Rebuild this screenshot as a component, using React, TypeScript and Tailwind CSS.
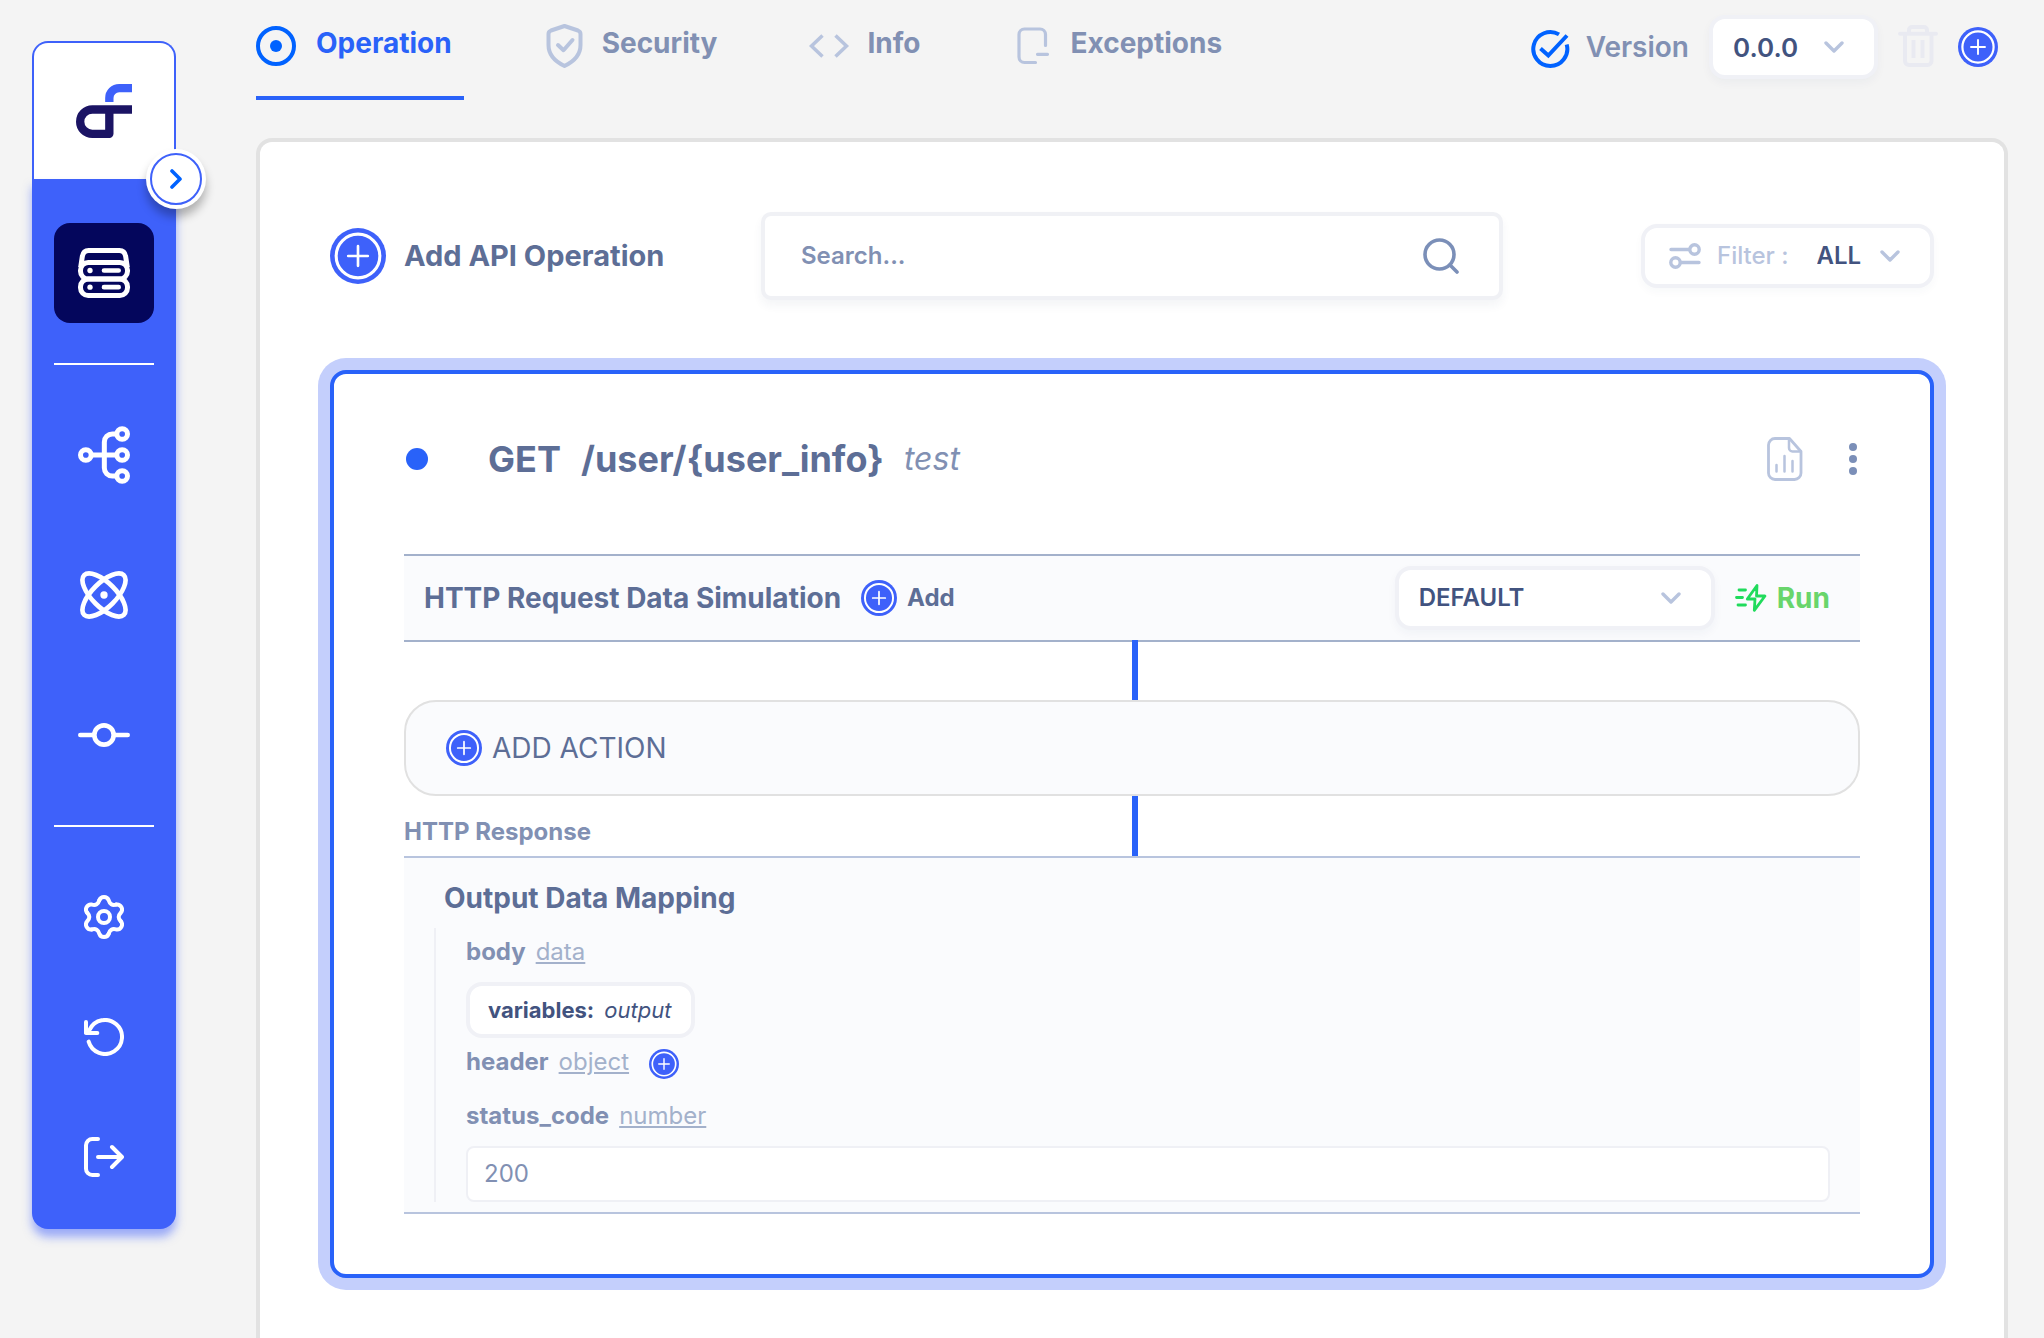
import React from "react";

type SvgProps = { className?: string };

const Logo = () => (
  <svg className="h-[54px] w-14" viewBox="228 192 168 162" fill="none" strokeWidth="25" aria-hidden="true">
    <path d="M328 246V234A29.5 29.5 0 0 1 357.500 204.500H396" stroke="#3e61fa" />
    <path d="M396 268.500H277a36.500 36.500 0 0 0 0 73H328V268.500" stroke="#1b1464" strokeLinejoin="round" />
  </svg>
);

const ServerIcon = () => (
  <svg className="h-[50px] w-[52px]" viewBox="234 684 156 150" fill="none" stroke="currentColor" strokeWidth="15" aria-hidden="true">
    <path d="M242 742L247 709Q250 691.500 266 691.500H358Q374 691.500 377 709L382 742" />
    <rect x="241.500" y="727.500" width="141" height="49.500" rx="23" />
    <rect x="241.500" y="777" width="141" height="49.500" rx="23" />
    <path d="M312 751.500H356M312 801.500H356" strokeLinecap="round" strokeWidth="14" />
    <circle cx="270" cy="751.500" r="8" fill="currentColor" stroke="none" />
    <circle cx="270" cy="801.500" r="8" fill="currentColor" stroke="none" />
  </svg>
);

const NodesIcon = () => (
  <svg className="h-[58px] w-[52px]" viewBox="234 138 156 174" fill="none" stroke="currentColor" strokeWidth="15" aria-hidden="true">
    <circle cx="257.500" cy="225" r="16" />
    <circle cx="366.500" cy="162" r="16" />
    <circle cx="366.500" cy="225" r="16" />
    <circle cx="366.500" cy="288" r="16" />
    <path d="M274 225H350M350 162H337a24 24 0 0 0-24 24V264a24 24 0 0 0 24 24H350" />
  </svg>
);

const AtomIcon = () => (
  <svg className="h-12 w-12" viewBox="-72 -72 144 144" fill="none" stroke="currentColor" strokeWidth="14" aria-hidden="true">
    <ellipse rx="84" ry="36" transform="rotate(45)" />
    <ellipse rx="84" ry="36" transform="rotate(-45)" />
    <circle r="11" fill="currentColor" stroke="none" />
  </svg>
);

const CommitIcon = () => (
  <svg className="h-6 w-[52px]" viewBox="0 0 156 72" fill="none" stroke="currentColor" strokeWidth="14" strokeLinecap="round" aria-hidden="true">
    <circle cx="78" cy="36" r="29" />
    <path d="M7 36H45M111 36H149" />
  </svg>
);

const GearIcon = () => (
  <svg className="h-11 w-10" viewBox="-60 -66 120 132" fill="none" stroke="currentColor" strokeWidth="12" strokeLinecap="round" aria-hidden="true">
    {[0, 60, 120, 180, 240, 300].map((a) => (
      <path key={a} transform={`rotate(${a})`} d="M-14.100 -50.100A15 15 0 0 1 14.100 -50.100Q18.800 -32.600 36.300 -37.300" />
    ))}
    <circle r="18" />
  </svg>
);

const ResetIcon = () => (
  <svg className="h-[38px] w-10" viewBox="252 654 120 114" fill="none" stroke="currentColor" strokeWidth="12" strokeLinecap="round" strokeLinejoin="round" aria-hidden="true">
    <path d="M266 725A51 51 0 1 0 269 689L258 699M258 666V699H292" />
  </svg>
);

const LogoutIcon = () => (
  <svg className="h-10 w-10" viewBox="252 1011 120 120" fill="none" stroke="currentColor" strokeWidth="12" strokeLinecap="round" strokeLinejoin="round" aria-hidden="true">
    <path d="M294 1017H277a19 19 0 0 0-19 19V1106a19 19 0 0 0 19 19H294M294 1071H365M336 1041L366 1071L336 1101" />
  </svg>
);

const TargetIcon = () => (
  <svg className="h-11 w-11 shrink-0" viewBox="0 0 44 44" fill="none" stroke="#0062ff" strokeWidth="4" aria-hidden="true">
    <circle cx="20" cy="22" r="18" />
    <circle cx="20" cy="22" r="6" fill="#0062ff" stroke="none" />
  </svg>
);

const ShieldIcon = () => (
  <svg className="h-11 w-11 shrink-0" viewBox="0 0 44 44" fill="none" stroke="#b8c4de" strokeWidth="4" strokeLinecap="round" strokeLinejoin="round" aria-hidden="true">
    <path d="M22.500 2L36 6.500Q38.500 7.500 38.500 10V21C38.500 31 32 37.500 22.500 42C13 37.500 6.500 31 6.500 21V10Q6.500 7.500 9 6.500Z" />
    <path d="M16 21L21.500 26.200L30.500 16" />
  </svg>
);

const CodeIcon = () => (
  <svg className="h-11 w-11 shrink-0" viewBox="0 0 44 44" fill="none" stroke="#b8c4de" strokeWidth="3.500" aria-hidden="true">
    <path d="M15.500 11.500L4.500 22L15.500 32.500M28.500 11.500L39.500 22L28.500 32.500" />
  </svg>
);

const PageMinusIcon = () => (
  <svg className="h-11 w-11 shrink-0" viewBox="0 0 44 44" fill="none" stroke="#b8c4de" strokeWidth="3.200" strokeLinecap="round" aria-hidden="true">
    <path d="M35.500 21.500V10.500a5.500 5.500 0 0 0-5.500-5.500H14.500a5.500 5.500 0 0 0-5.500 5.500V33a5.500 5.500 0 0 0 5.500 5.500H25.500M27.500 30.300H37.500" />
  </svg>
);

const CheckCircleIcon = () => (
  <svg className="h-11 w-10 shrink-0" viewBox="0 0 40 44" fill="none" stroke="#0062ff" strokeWidth="4" aria-hidden="true">
    <path d="M29 9.400A17 17 0 1 0 36.700 19.500" />
    <path d="M10.500 23.500L18.300 30.500L37 10.500" />
  </svg>
);

const TrashIcon = () => (
  <svg className="h-11 w-10" viewBox="0 0 40 44" fill="none" stroke="#e9eaf1" strokeWidth="4" aria-hidden="true">
    <path d="M2 8.800H38" strokeLinecap="round" />
    <path d="M11 8.500V5a3 3 0 0 1 3-3H26a3 3 0 0 1 3 3V8.500M7 9V36a4 4 0 0 0 4 4H29.500a4 4 0 0 0 4-4V9M15.500 15V33M24.500 15V33" />
  </svg>
);

const PlusCircle = ({ className }: SvgProps) => (
  <svg className={className} viewBox="0 0 40 40" fill="none" stroke="white" aria-hidden="true">
    <circle cx="20" cy="20" r="20" fill="#3e61fa" stroke="none" />
    <circle cx="20" cy="20" r="15.600" strokeWidth="2.200" />
    <path d="M13 20H27M20 13V27" strokeWidth="1.900" strokeLinecap="round" />
  </svg>
);

const Chevron = ({ className }: SvgProps) => (
  <svg className={className} viewBox="0 0 20 12" fill="none" stroke="#b8c4de" strokeWidth="3.400" strokeLinecap="round" strokeLinejoin="round" aria-hidden="true">
    <path d="M2 2L10 10L18 2" />
  </svg>
);

const SearchIcon = () => (
  <svg className="h-9 w-9" viewBox="0 0 36 36" fill="none" stroke="#7b8fb8" strokeWidth="3.600" strokeLinecap="round" aria-hidden="true">
    <circle cx="16.500" cy="16.500" r="14.500" />
    <path d="M27 27L34 34" />
  </svg>
);

const SlidersIcon = () => (
  <svg className="h-[26px] w-8 shrink-0" viewBox="0 0 32 26" fill="none" stroke="#b8c4de" strokeWidth="3.400" strokeLinecap="round" aria-hidden="true">
    <path d="M2 6.500H20M12 19.500H30" />
    <circle cx="25.500" cy="6.500" r="4.700" />
    <circle cx="6.500" cy="19.500" r="4.700" />
  </svg>
);

const ReportIcon = () => (
  <svg className="h-11 w-9" viewBox="0 0 36 44" fill="none" stroke="#b8c4de" strokeWidth="2.800" strokeLinejoin="round" strokeLinecap="round" aria-hidden="true">
    <path d="M22.500 1.500H8A6.500 6.500 0 0 0 1.500 8V36A6.500 6.500 0 0 0 8 42.500H27.500A6.500 6.500 0 0 0 34 36V14.500Z" />
    <path d="M22 2V11A3.500 3.500 0 0 0 25.500 14.500H33.500M9.500 28V34.500M17.500 19V34.500M25.500 24V34.500" strokeWidth="2.500" />
  </svg>
);

const KebabIcon = () => (
  <svg className="h-8 w-2" viewBox="0 0 8 32" fill="#7b8fb8" aria-hidden="true">
    <circle cx="4" cy="4" r="4" />
    <circle cx="4" cy="16" r="4" />
    <circle cx="4" cy="28" r="4" />
  </svg>
);

const RunIcon = () => (
  <svg className="h-7 w-8" viewBox="0 0 32 28" fill="none" stroke="#20db5c" strokeWidth="2.800" strokeLinecap="round" strokeLinejoin="round" aria-hidden="true">
    <path d="M22 1.500L12.300 15H20L19.300 26.300L30 12H21.500ZM4 6H10.500M1.500 13.500H7.500M3 21H10.500" />
  </svg>
);

const sideButton = "flex size-[100px] items-center justify-center rounded-2xl text-white";

function SideButton({ label, active, children }: { label: string; active?: boolean; children: React.ReactNode }) {
  return (
    <button type="button" aria-label={label} className={active ? sideButton + " bg-[#04065c]" : sideButton}>
      {children}
    </button>
  );
}

function Sidebar() {
  return (
    <aside className="relative mt-[41px] ml-8 flex w-36 shrink-0 flex-col self-start rounded-2xl">
      <a href="#home" aria-label="Home" className="flex h-[138px] items-center justify-center rounded-t-2xl border-2 border-b-0 border-[#3e61fa] bg-white">
        <Logo />
      </a>
      <nav className="flex flex-col items-center rounded-b-2xl bg-[#3e61fa] pt-11 pb-[22px] shadow-[0_8px_10px_rgba(65,97,251,0.5)]">
        <div className="flex flex-col items-center gap-10">
          <SideButton label="APIs" active><ServerIcon /></SideButton>
          <hr className="w-full border-t-2 border-white" />
          <SideButton label="Flows"><NodesIcon /></SideButton>
          <SideButton label="Models"><AtomIcon /></SideButton>
          <SideButton label="Connections"><CommitIcon /></SideButton>
          <hr className="w-full border-t-2 border-white" />
        </div>
        <div className="mt-10 flex flex-col gap-5">
          <SideButton label="Settings"><GearIcon /></SideButton>
          <SideButton label="Reset"><ResetIcon /></SideButton>
          <SideButton label="Log out"><LogoutIcon /></SideButton>
        </div>
      </nav>
      <button type="button" aria-label="Expand sidebar" className="absolute top-[108px] -right-[30px] flex size-[60px] items-center justify-center rounded-full bg-white shadow-[0_8px_10px_rgba(0,0,0,0.28)]">
        <span className="flex size-[52px] items-center justify-center rounded-full border-2 border-[#3e61fa]">
          <svg className="h-5 w-3" viewBox="0 0 12 20" fill="none" stroke="#0062ff" strokeWidth="3.600" strokeLinecap="round" strokeLinejoin="round" aria-hidden="true">
            <path d="M2 2L10 10L2 18" />
          </svg>
        </span>
      </button>
    </aside>
  );
}

function Tab({ label, icon, active }: { label: string; icon: React.ReactNode; active?: boolean }) {
  return (
    <button
      type="button"
      role="tab"
      aria-selected={!!active}
      className={
        active
          ? "flex h-[100px] items-start gap-4 border-b-4 border-[#2962f9] pt-6 pr-3 text-[28px] leading-[38px] font-bold text-[#2962f9]"
          : "flex h-[100px] items-start gap-4 border-b-4 border-transparent pt-6 pr-3 text-[28px] leading-[38px] font-bold text-[#8190b3]"
      }
    >
      {icon}
      <span>{label}</span>
    </button>
  );
}

const selectBox = "h-16 w-full appearance-none rounded-2xl border-4 border-[#f0f1f6] bg-white pl-5 font-semibold text-[#42537f] shadow-[0_4px_10px_rgba(30,50,90,0.04)] outline-none";

function TopBar() {
  return (
    <header className="flex items-start justify-between">
      <div role="tablist" className="flex gap-[78px]">
        <Tab label="Operation" icon={<TargetIcon />} active />
        <Tab label="Security" icon={<ShieldIcon />} />
        <Tab label="Info" icon={<CodeIcon />} />
        <Tab label="Exceptions" icon={<PageMinusIcon />} />
      </div>
      <div className="flex h-[94px] items-center gap-5 pr-2.5">
        <label htmlFor="version" className="flex items-center gap-4 text-[28px] font-semibold text-[#8190b3]">
          <CheckCircleIcon />
          Version
        </label>
        <div className="relative w-[169px]">
          <select id="version" className={selectBox + " text-[26px]"} defaultValue="0.0.0">
            <option>0.0.0</option>
          </select>
          <Chevron className="pointer-events-none absolute top-[26px] right-[34px] h-3 w-5" />
        </div>
        <button type="button" aria-label="Delete version"><TrashIcon /></button>
        <button type="button" aria-label="Add version"><PlusCircle className="size-10" /></button>
      </div>
    </header>
  );
}

function Toolbar() {
  return (
    <div className="grid grid-cols-[1fr_minmax(0,742px)_1fr] items-center">
      <button type="button" className="flex items-center gap-[18px] justify-self-start text-[29px] font-bold text-[#5d6e96]">
        <PlusCircle className="size-14" />
        Add API Operation
      </button>
      <div className="flex h-[88px] items-center rounded-[10px] border-4 border-[#f0f1f5] bg-white pr-10 pl-9 shadow-[0_6px_10px_rgba(30,50,90,0.05)]">
        <input type="search" aria-label="Search" placeholder="Search..." className="min-w-0 flex-1 bg-transparent text-2xl font-semibold text-[#8190b3] outline-none placeholder:text-[#8190b3]" />
        <button type="button" aria-label="Run search"><SearchIcon /></button>
      </div>
      <div className="relative flex h-16 w-[293px] items-center justify-self-end rounded-2xl border-4 border-[#f0f1f6] bg-white pl-6 shadow-[0_4px_8px_rgba(30,50,90,0.03)]">
        <SlidersIcon />
        <label htmlFor="filter" className="ml-4 text-2xl font-medium text-[#b8c4de]">Filter :</label>
        <select id="filter" defaultValue="ALL" className="ml-7 min-w-0 flex-1 appearance-none bg-transparent text-2xl font-semibold text-[#42537f] outline-none">
          <option>ALL</option>
        </select>
        <Chevron className="pointer-events-none absolute top-[22px] right-[30px] h-3 w-5" />
      </div>
    </div>
  );
}

function Field({ name, type, htmlFor, children }: { name: string; type: string; htmlFor?: string; children?: React.ReactNode }) {
  return (
    <div className="flex h-12 items-center gap-2.5 text-2xl">
      <label htmlFor={htmlFor} className="font-bold text-[#8190b3]">{name}</label>
      <a href={"#" + type} className="text-[#a3b1cb] underline">{type}</a>
      {children}
    </div>
  );
}

function OperationCard() {
  return (
    <section className="mt-[70px] rounded-2xl border-4 border-[#2962f9] bg-white px-[70px] py-[60px] ring-12 ring-[#c4cffc]">
      <div className="mb-[70px] flex h-[50px] items-center">
        <span className="mx-0.5 size-[22px] rounded-full bg-[#2962f9]" />
        <h2 className="ml-[58px] flex items-center gap-5 text-[36px] leading-[50px] font-bold text-[#5d6e96]">
          <span>GET</span>
          <span>/user/&#123;user_info&#125;</span>
          <em className="text-[32px] font-normal text-[#8190b3]">test</em>
        </h2>
        <div className="ml-auto flex items-center gap-[46px] pr-[3px]">
          <button type="button" aria-label="Report"><ReportIcon /></button>
          <button type="button" aria-label="More options"><KebabIcon /></button>
        </div>
      </div>

      <div className="flex h-[88px] items-center border-y-2 border-[#a3b1cb] bg-[#fafbfd] pr-[30px] pl-5">
        <h3 className="text-[28px] font-bold text-[#5d6e96]">HTTP Request Data Simulation</h3>
        <button type="button" className="ml-5 flex items-center gap-2.5 text-2xl font-bold text-[#5d6e96]">
          <PlusCircle className="size-9" />
          Add
        </button>
        <div className="relative ml-auto w-80">
          <select aria-label="Simulation" className={selectBox + " text-2xl"} defaultValue="DEFAULT">
            <option>DEFAULT</option>
          </select>
          <Chevron className="pointer-events-none absolute top-[26px] right-[34px] h-3 w-5" />
        </div>
        <button type="button" className="ml-5 flex items-center gap-2.5 text-[28px] font-bold text-[#69d56b]">
          <RunIcon />
          Run
        </button>
      </div>

      <div className="-mt-0.5 ml-[50%] h-[60px] w-1.5 bg-[#2962f9]" />

      <button type="button" className="flex h-24 w-full items-center gap-2.5 rounded-[32px] border-2 border-[#e1e1e1] bg-[#fafbfd] px-10 text-[28px] text-[#5d6e96]">
        <PlusCircle className="size-9" />
        ADD ACTION
      </button>

      <div className="flex h-[60px]">
        <h3 className="w-1/2 self-end pb-2 text-2xl font-bold text-[#8190b3]">HTTP Response</h3>
        <div className="w-1.5 bg-[#2962f9]" />
      </div>

      <div className="border-y-2 border-[#b8c4de] bg-[#fafbfd] pt-5 pr-[30px] pb-2.5 pl-[30px]">
        <h3 className="mb-2.5 ml-2.5 text-[28px] leading-10 font-bold text-[#5d6e96]">Output Data Mapping</h3>
        <div className="border-l-2 border-[#eff0f5] pl-[30px]">
          <Field name="body" type="data" />
          <div className="mt-1.5 flex">
            <button type="button" className="flex h-14 items-center gap-2.5 rounded-2xl border-4 border-[#f0f1f6] bg-white pr-5 pl-[18px] text-[22px] text-[#42537f]">
              <b className="font-bold">variables:</b>
              <em>output</em>
            </button>
          </div>
          <Field name="header" type="object">
            <button type="button" aria-label="Add header" className="ml-2.5 pt-1"><PlusCircle className="size-[30px]" /></button>
          </Field>
          <div className="mt-1.5">
            <Field name="status_code" type="number" htmlFor="status-code" />
          </div>
          <input id="status-code" type="text" defaultValue="200" className="mt-1.5 block h-14 w-full rounded-lg border-2 border-[#eff0f5] bg-white px-4 pb-0.5 text-2xl text-[#8190b3] outline-none" />
        </div>
      </div>
    </section>
  );
}

export default function App() {
  return (
    <div className="flex min-h-screen bg-[#f4f4f4] font-['Inter',sans-serif]">
      <Sidebar />
      <main className="ml-20 flex min-w-0 flex-1 flex-col pr-9">
        <TopBar />
        <div className="mt-[38px] flex-1 rounded-t-2xl border-4 border-b-0 border-[#e2e2e2] bg-white px-[70px] pt-[70px] pb-12">
          <Toolbar />
          <OperationCard />
        </div>
      </main>
    </div>
  );
}
